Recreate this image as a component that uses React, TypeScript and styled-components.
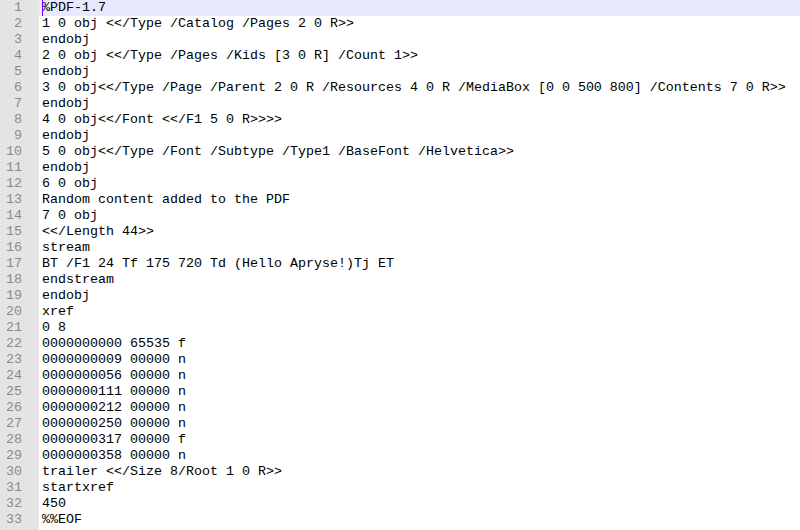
import React from "react";
import styled, { createGlobalStyle } from "styled-components";

const Global = createGlobalStyle`
  html, body { margin: 0; padding: 0; background: #ffffff; }
  body { width: 800px; height: 530px; overflow: hidden; }
`;

const lines = [
  "%PDF-1.7",
  "1 0 obj <</Type /Catalog /Pages 2 0 R>>",
  "endobj",
  "2 0 obj <</Type /Pages /Kids [3 0 R] /Count 1>>",
  "endobj",
  "3 0 obj<</Type /Page /Parent 2 0 R /Resources 4 0 R /MediaBox [0 0 500 800] /Contents 7 0 R>>",
  "endobj",
  "4 0 obj<</Font <</F1 5 0 R>>>>",
  "endobj",
  "5 0 obj<</Type /Font /Subtype /Type1 /BaseFont /Helvetica>>",
  "endobj",
  "6 0 obj",
  "Random content added to the PDF",
  "7 0 obj",
  "<</Length 44>>",
  "stream",
  "BT /F1 24 Tf 175 720 Td (Hello Apryse!)Tj ET",
  "endstream",
  "endobj",
  "xref",
  "0 8",
  "0000000000 65535 f",
  "0000000009 00000 n",
  "0000000056 00000 n",
  "0000000111 00000 n",
  "0000000212 00000 n",
  "0000000250 00000 n",
  "0000000317 00000 f",
  "0000000358 00000 n",
  "trailer <</Size 8/Root 1 0 R>>",
  "startxref",
  "450",
  "%%EOF",
];

const Editor = styled.div`
  display: flex;
  flex-direction: column;
  width: 800px;
  height: 530px;
  background: linear-gradient(to right, #e4e4e4 0, #e4e4e4 39px, #ffffff 39px);
  font-family: "Liberation Mono", "Courier New", monospace;
  font-size: 13.33px;
  line-height: 16px;
`;

const Row = styled.div`
  display: grid;
  grid-template-columns: 22px 17px 1fr;
  height: 16px;
`;

const LineNo = styled.span`
  color: #8a8a8a;
  text-align: right;
  white-space: pre;
`;

const Fold = styled.span``;

const Code = styled.span<{ $active?: boolean }>`
  position: relative;
  padding-left: 3px;
  color: #000000;
  white-space: pre;
  background: ${(p) => (p.$active ? "#e8e8ff" : "transparent")};
  &::before {
    content: "";
    display: ${(p) => (p.$active ? "block" : "none")};
    position: absolute;
    left: 3px;
    top: 0;
    width: 1px;
    height: 16px;
    background: #8000ff;
  }
`;

export default function App() {
  return (
    <>
      <Global />
      <Editor>
        {lines.map((l, i) => (
          <Row key={i}>
            <LineNo>{i + 1}</LineNo>
            <Fold />
            <Code $active={i === 0}>{l}</Code>
          </Row>
        ))}
      </Editor>
    </>
  );
}
